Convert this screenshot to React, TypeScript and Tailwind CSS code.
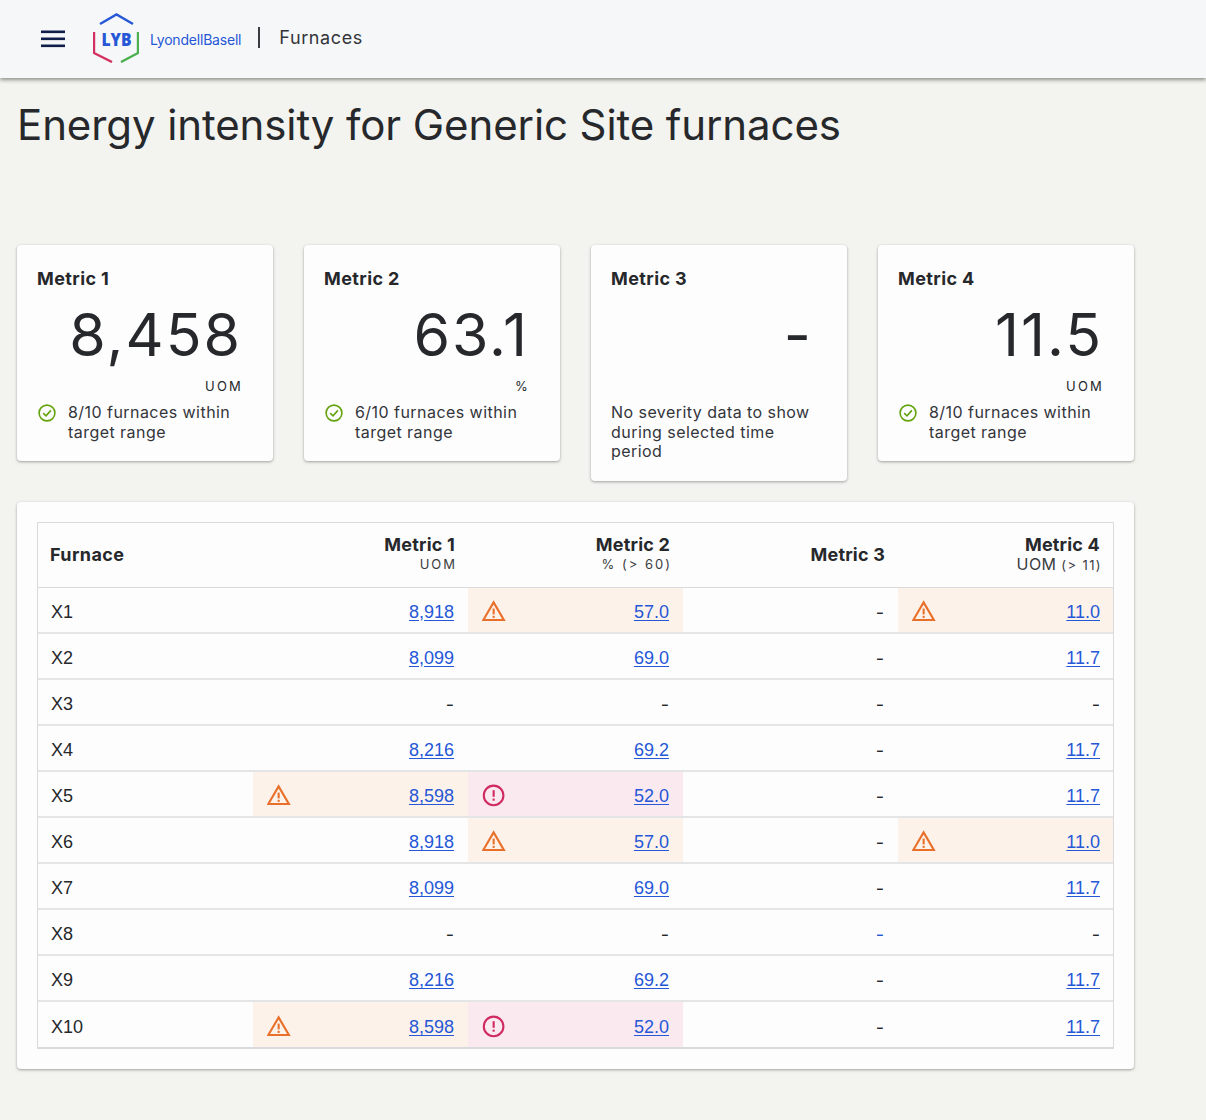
import React from "react";

const Warn = () => (
  <svg width="24" height="24" viewBox="0 0 24 24" fill="none" className="block">
    <path d="M11.6 3.4 L21.9 21 H1.3 Z" stroke="#e8702a" strokeWidth="2.1" strokeLinejoin="miter" />
    <rect x="10.6" y="9.6" width="2.1" height="5.8" fill="#e8702a" />
    <rect x="10.6" y="16.8" width="2.1" height="2.1" fill="#e8702a" />
  </svg>
);
const Err = () => (
  <svg width="24" height="24" viewBox="0 0 24 24" fill="none" className="block">
    <circle cx="11.6" cy="12.4" r="9.8" stroke="#d02a63" strokeWidth="2.1" />
    <rect x="10.6" y="7.2" width="2.1" height="6.6" fill="#d02a63" />
    <rect x="10.6" y="15.6" width="2.1" height="2.1" fill="#d02a63" />
  </svg>
);
const Check = () => (
  <svg width="18" height="18" viewBox="0 0 18 18" fill="none" className="block shrink-0">
    <circle cx="9" cy="9" r="7.9" stroke="#65a30d" strokeWidth="1.6" />
    <path d="M5.2 9.2 L8 11.9 L12.9 6.4" stroke="#65a30d" strokeWidth="1.6" />
  </svg>
);

const Logo = () => (
  <svg width="46" height="50" viewBox="0 0 46 50" fill="none" className="block">
    <path d="M7 11 L23.5 1.5 L40 11" stroke="#2557d6" strokeWidth="2.4" />
    <path d="M1 19 V40 L19 49" stroke="#d32f5f" strokeWidth="2.4" />
    <path d="M45 19 V40 L28 49" stroke="#4caf50" strokeWidth="2.4" />
    <text x="8.5" y="32.5" textLength="30" lengthAdjust="spacingAndGlyphs" fontFamily="Open Sans, sans-serif" fontWeight="800" fontSize="18" fill="#2557d6">LYB</text>
  </svg>
);

type Cell = { v: string; s?: "w" | "e"; link?: boolean };
const l = (v: string, s?: "w" | "e"): Cell => ({ v, s, link: true });
const d: Cell = { v: "-" };
const bl: Cell = { v: "-", link: true };
const rows: [string, Cell, Cell, Cell, Cell][] = [
  ["X1", l("8,918"), l("57.0", "w"), d, l("11.0", "w")],
  ["X2", l("8,099"), l("69.0"), d, l("11.7")],
  ["X3", d, d, d, d],
  ["X4", l("8,216"), l("69.2"), d, l("11.7")],
  ["X5", l("8,598", "w"), l("52.0", "e"), d, l("11.7")],
  ["X6", l("8,918"), l("57.0", "w"), d, l("11.0", "w")],
  ["X7", l("8,099"), l("69.0"), d, l("11.7")],
  ["X8", d, d, bl, d],
  ["X9", l("8,216"), l("69.2"), d, l("11.7")],
  ["X10", l("8,598", "w"), l("52.0", "e"), d, l("11.7")],
];

const cards = [
  { t: "Metric 1", v: "8,458", u: "UOM", n: "8/10 furnaces within target range", ok: true },
  { t: "Metric 2", v: "63.1", u: "%", n: "6/10 furnaces within target range", ok: true },
  { t: "Metric 3", v: "-", u: "", n: "No severity data to show during selected time period", ok: false },
  { t: "Metric 4", v: "11.5", u: "UOM", n: "8/10 furnaces within target range", ok: true },
];

function DataCell({ c, last }: { c: Cell; last?: boolean }) {
  const bg = c.s === "w" ? "bg-[#fdf2e9]" : c.s === "e" ? "bg-[#fbe9f0]" : "";
  let text;
  if (c.v === "-") {
    text = (
      <span className={`text-[18px] font-['Inter',sans-serif] ${c.link ? "text-[#2557d6]" : "text-[#26282b]"}`}>-</span>
    );
  } else {
    text = (
      <span className="text-[#2557d6] underline underline-offset-2 text-[18px] font-['Liberation_Sans',sans-serif]">{c.v}</span>
    );
  }
  return (
    <div className={`flex items-center justify-between pl-[14px] ${last ? "pr-[13px]" : "pr-[14px]"} ${bg}`}>
      <span className="block pt-[2px]">{c.s === "w" ? <Warn /> : c.s === "e" ? <Err /> : null}</span>
      <span className="block pt-[5px]">{text}</span>
    </div>
  );
}

function Head({ t, u }: { t: string; u?: string }) {
  return (
    <div className={`flex flex-col items-end justify-center pr-[13px] text-right ${u ? "pb-[2px]" : ""}`}>
      <div className="text-[18px] font-bold leading-[22px] text-[#26282b] tracking-[0.2px]">{t}</div>
      {u ? (
        <div className="mr-[-2px] text-[13px] leading-[17px] tracking-[2px] text-[#3a3c40]">{u}</div>
      ) : null}
    </div>
  );
}

export default function App() {
  return (
    <div className="min-h-[1120px] w-full bg-[#f3f3ef] font-['Inter',sans-serif] text-[#26282b]">
      <header className="flex h-[78px] items-center bg-[#f6f7f9] shadow-[0_2px_4px_rgba(0,0,0,0.42)]">
        <svg width="24" height="18" viewBox="0 0 24 18" className="ml-[41px] block" fill="#101f4a">
          <rect x="0" y="0.5" width="24" height="2.6" />
          <rect x="0" y="7.5" width="24" height="2.6" />
          <rect x="0" y="14.5" width="24" height="2.6" />
        </svg>
        <div className="ml-[28px] mt-[-2px]"><Logo /></div>
        <span className="ml-[11px] mt-[1px] text-[14px] tracking-[-0.2px] text-[#2557d6]">LyondellBasell</span>
        <div className="ml-[17px] mt-[-3px] h-[21px] w-[2px] bg-[#3a3c40]" />
        <span className="ml-[19px] mt-[-4px] text-[18px] tracking-[0.6px] text-[#33353a]">Furnaces</span>
      </header>

      <h1 className="ml-[17px] mt-[20px] text-[42px] font-normal leading-[54px] tracking-[-0.1px]">
        Energy intensity for Generic Site furnaces
      </h1>

      <div className="ml-[17px] mt-[93px] flex items-start gap-[31px]">
        {cards.map((c) => (
          <div key={c.t} className="w-[256px] rounded-[4px] bg-[#fdfdfe] px-[20px] pt-[23px] pb-[19px] shadow-[0_1px_3px_rgba(0,0,0,0.35)]">
            <div className="text-[18px] font-bold leading-[22px] tracking-[0.4px]">{c.t}</div>
            <div className={`mt-[10px] text-right text-[59px] font-normal leading-[70px] tracking-[2px] ${c.v === "-" ? "pr-[14px]" : "pr-[11px]"}`}>{c.v}</div>
            <div className="mt-[6px] h-[18px] pt-[2px] pr-[10px] text-right text-[13px] leading-[16px] tracking-[2.2px]">{c.u}</div>
            <div className={`mt-[9px] flex gap-[12px] ${c.ok ? "pl-[1px]" : ""}`}>
              {c.ok ? <div className="mt-[1px]"><Check /></div> : null}
              <div className={`${c.ok ? "w-[186px]" : "w-[216px]"} text-[16px] leading-[19.5px] tracking-[0.45px] text-[#33353a]`}>{c.n}</div>
            </div>
          </div>
        ))}
      </div>

      <div className="ml-[17px] mt-[21px] w-[1117px] rounded-[4px] bg-[#fdfdfe] px-[20px] pt-[20px] pb-[20px] shadow-[0_1px_3px_rgba(0,0,0,0.35)]">
        <div className="border border-[#d9dadd] border-b-2">
          <div className="grid h-[65px] grid-cols-[repeat(5,215px)] border-b border-[#d9dadd]">
            <div className="flex items-center pl-[12px] text-[18px] font-bold tracking-[0.4px]">Furnace</div>
            <Head t="Metric 1" u="UOM" />
            <Head t="Metric 2" u="% (> 60)" />
            <Head t="Metric 3" />
            <div className="flex flex-col items-end justify-center pb-[2px] pr-[13px] text-right">
              <div className="text-[18px] font-bold leading-[22px] tracking-[0.2px]">Metric 4</div>
              <div className="mr-[-2px] text-[16px] leading-[17px] tracking-[0.4px] text-[#3a3c40]">
                UOM <span className="text-[13px] tracking-[1.4px]">(&gt; 11)</span>
              </div>
            </div>
          </div>
          {rows.map((r, i) => (
            <div key={r[0]} className={`grid ${i < 9 ? "h-[46.1px] border-b-2 border-[#e4e5e7]" : "h-[45.1px]"} grid-cols-[repeat(5,215px)]`}>
              <div className="flex items-center pl-[13px] pt-[5px] text-[18px] font-['Liberation_Sans',sans-serif]">{r[0]}</div>
              <DataCell c={r[1]} />
              <DataCell c={r[2]} />
              <DataCell c={r[3]} />
              <DataCell c={r[4]} last />
            </div>
          ))}
        </div>
      </div>
    </div>
  );
}
